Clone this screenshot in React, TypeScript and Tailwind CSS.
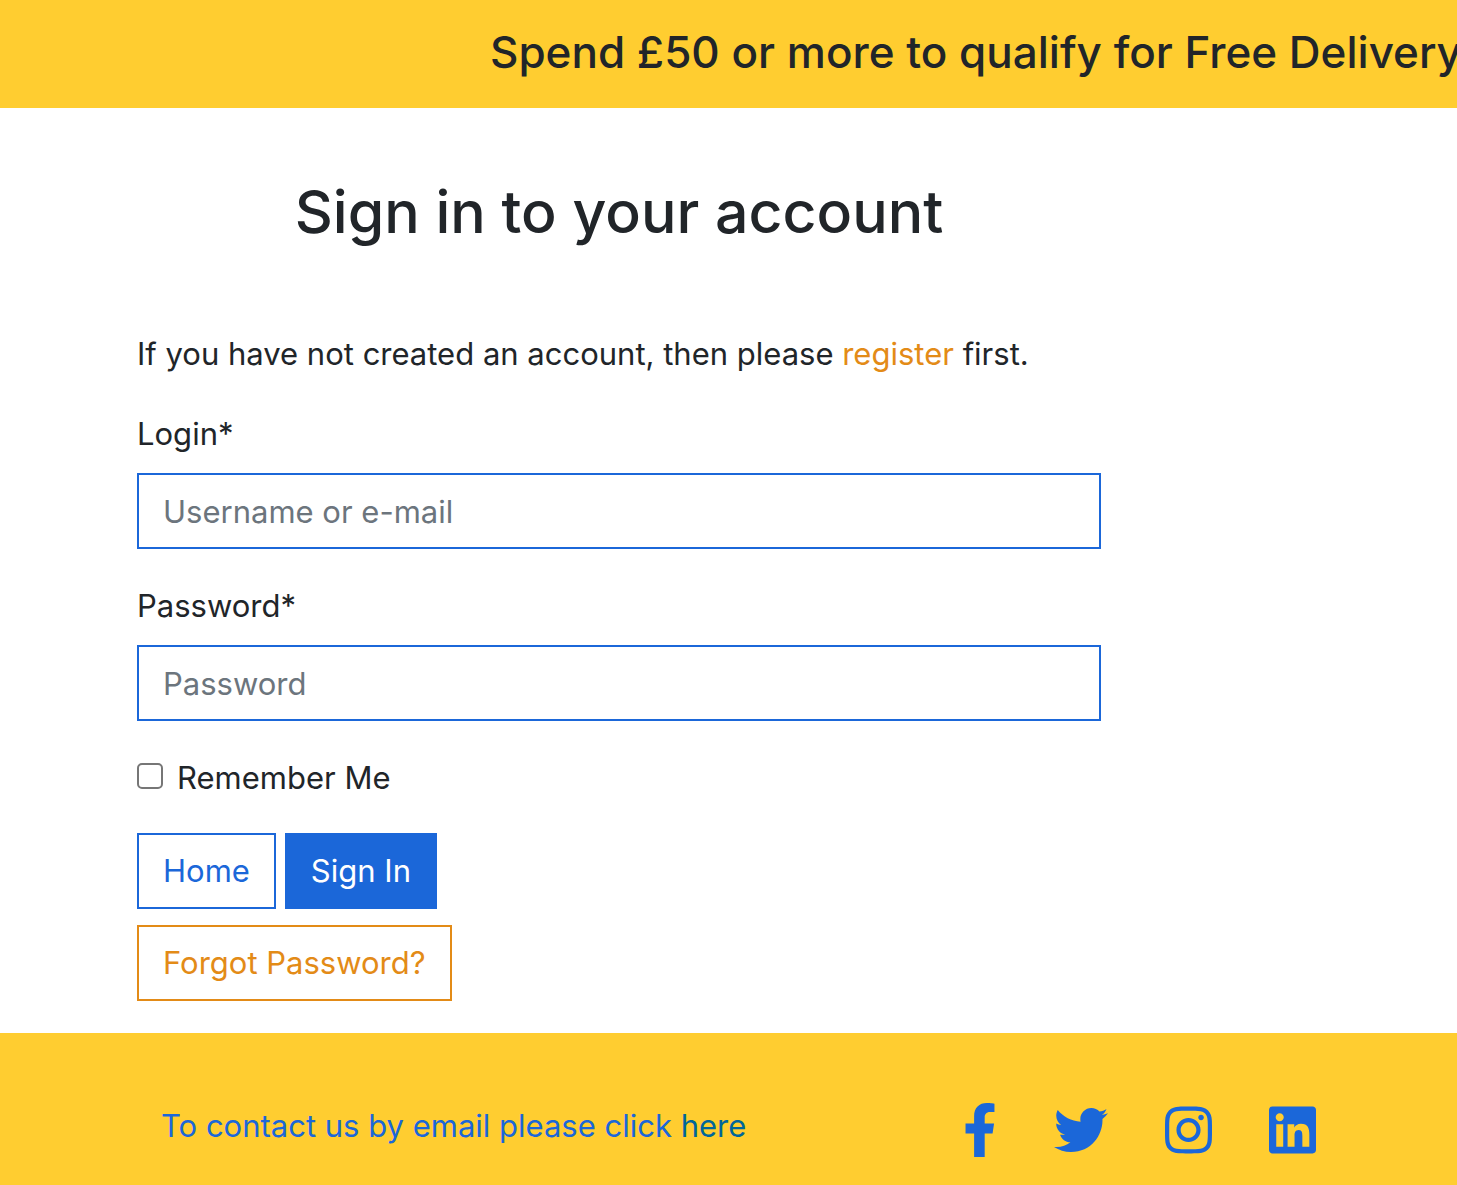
import React from "react";
import { FaFacebookF, FaTwitter, FaInstagram, FaLinkedin } from "react-icons/fa";

const fieldClass =
  "mt-[15px] block h-[76px] w-full border-2 border-[#1b67d9] bg-white px-6 text-[31px] text-[#495057] placeholder:text-[#6c757d] placeholder:opacity-100";
const buttonClass = "flex h-[76px] items-center border-2 px-6";

const socials = [
  { label: "Facebook", Icon: FaFacebookF, size: "h-[54px] w-[34px]" },
  { label: "Twitter", Icon: FaTwitter, size: "h-[54px] w-[54px]" },
  { label: "Instagram", Icon: FaInstagram, size: "h-[54px] w-[47px]" },
  { label: "LinkedIn", Icon: FaLinkedin, size: "h-[54px] w-[47px]" },
];

export default function App() {
  return (
    <div className="overflow-x-hidden bg-white font-['Inter',sans-serif] text-[31px] leading-[48px] text-[#212529]">
      <header className="flex h-[108px] items-center overflow-hidden bg-[#ffcd30] pb-1 pl-[490px]">
        <p className="text-[44px] font-medium whitespace-nowrap">Spend £50 or more to qualify for Free Delivery</p>
      </header>
      <main className="mr-[356px] ml-[137px] pt-16 pb-8">
        <h1 className="text-center text-[59px] leading-[80px] font-medium">Sign in to your account</h1>
        <p className="mt-[78px] whitespace-nowrap">
          If you have not created an account, then please{" "}
          <a href="#register" className="text-[#e38b17]">register</a> first.
        </p>
        <form className="mt-8" onSubmit={(e) => e.preventDefault()}>
          <label htmlFor="login" className="block">Login*</label>
          <input id="login" type="text" placeholder="Username or e-mail" className={fieldClass} />
          <label htmlFor="password" className="mt-[33px] block">Password*</label>
          <input id="password" type="password" placeholder="Password" className={fieldClass} />
          <div className="mt-[33px] flex items-center gap-[14px]">
            <input
              id="remember"
              type="checkbox"
              className="mb-1 size-[26px] appearance-none rounded-[5px] border-2 border-[#767676] bg-white checked:bg-[#1b67d9]"
            />
            <label htmlFor="remember">Remember Me</label>
          </div>
          <div className="mt-[31px] flex gap-[9px]">
            <a href="#home" className={`${buttonClass} border-[#1b67d9] text-[#1b67d9]`}>Home</a>
            <button type="submit" className={`${buttonClass} border-[#1b67d9] bg-[#1b67d9] text-white`}>Sign In</button>
          </div>
          <div className="mt-4 flex">
            <a href="#forgot" className={`${buttonClass} border-[#e38b17] text-[#e38b17]`}>Forgot Password?</a>
          </div>
        </form>
      </main>
      <footer className="flex h-[152px] items-center justify-between bg-[#ffcd30] pt-[34px] pr-[141px] pl-[161px] text-[#1b67d9]">
        <p>
          To contact us by email please click <a href="#contact" className="text-[#00669a]">here</a>
        </p>
        <nav aria-label="Social media" className="mt-2 flex items-center gap-[57px]">
          {socials.map(({ label, Icon, size }) => (
            <a key={label} href={`#${label.toLowerCase()}`} aria-label={label}>
              <Icon className={size} />
            </a>
          ))}
        </nav>
      </footer>
    </div>
  );
}
